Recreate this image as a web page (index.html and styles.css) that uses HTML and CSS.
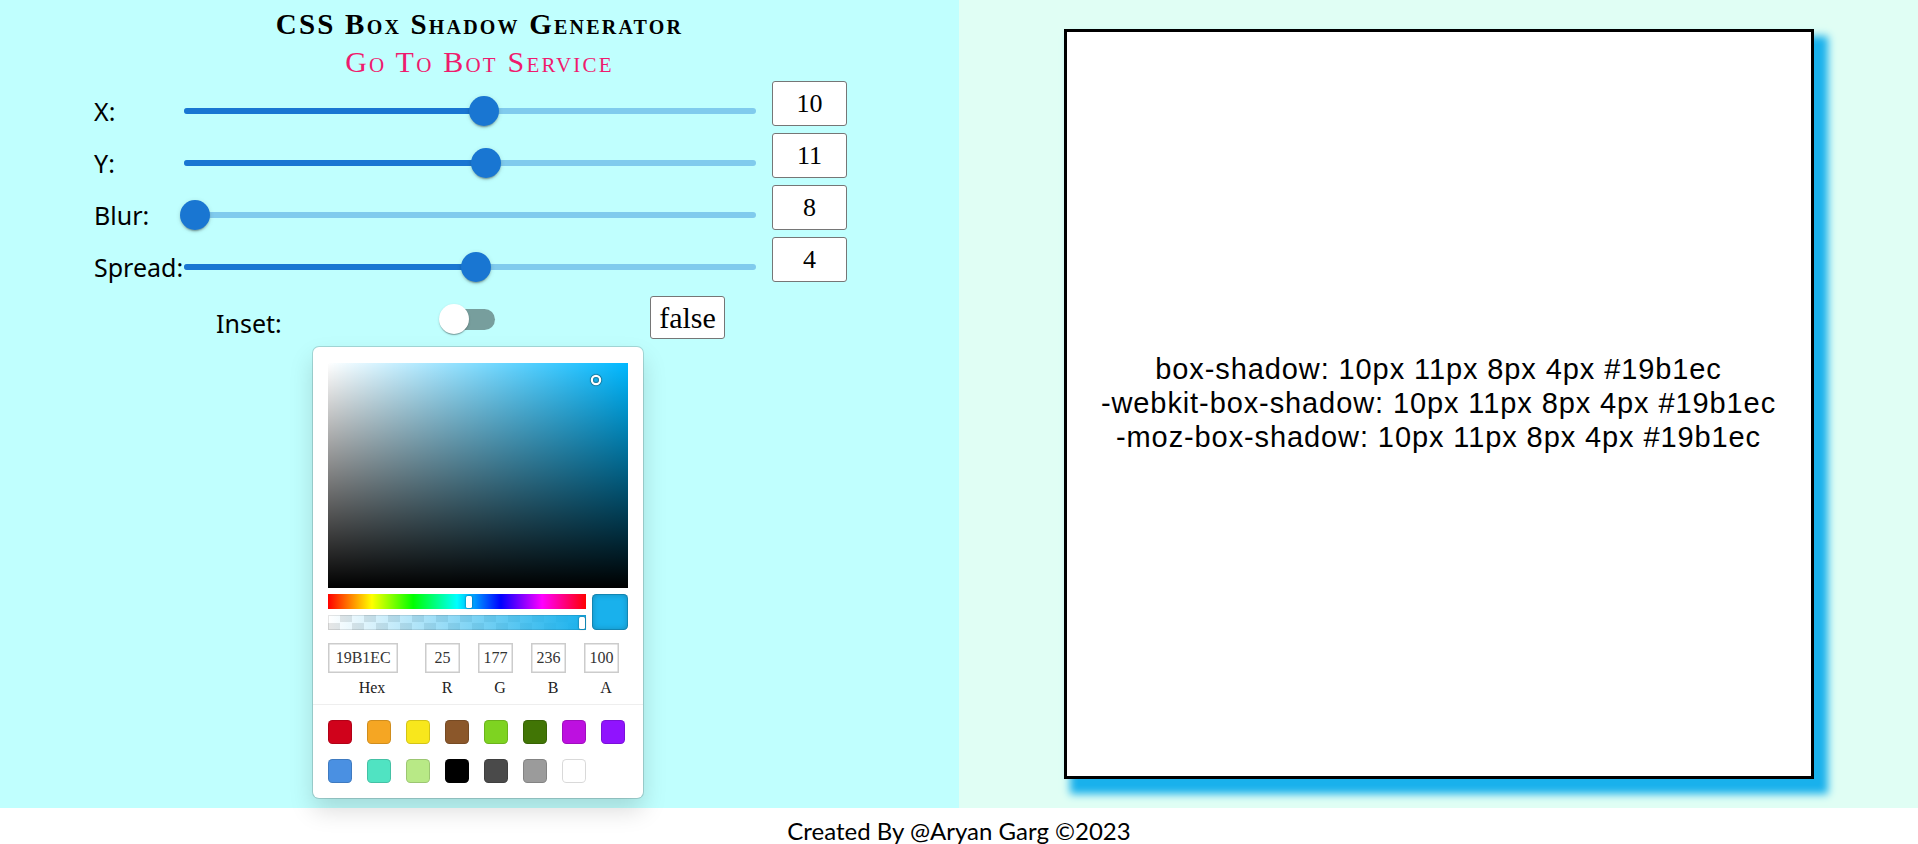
FILE: index.html
```html
<!DOCTYPE html>
<html lang="en">
<head>
<meta charset="utf-8">
<title>CSS Box Shadow Generator</title>
<link rel="stylesheet" href="styles.css">
</head>
<body>
<div class="main">
  <section class="left">
    <h1 class="title">CSS Box Shadow Generator</h1>
    <a class="bot" href="#">Go To Bot Service</a>
    <div class="rows">
      <div class="row">
        <span class="lbl">X:</span>
        <div class="slider"><div class="rail"></div><div class="track" style="width:52.5%"></div><div class="thumb" style="left:52.5%"></div></div>
        <div class="num">10</div>
      </div>
      <div class="row">
        <span class="lbl">Y:</span>
        <div class="slider"><div class="rail"></div><div class="track" style="width:52.75%"></div><div class="thumb" style="left:52.75%"></div></div>
        <div class="num">11</div>
      </div>
      <div class="row">
        <span class="lbl">Blur:</span>
        <div class="slider"><div class="rail"></div><div class="track" style="width:2%"></div><div class="thumb" style="left:2%"></div></div>
        <div class="num">8</div>
      </div>
      <div class="row">
        <span class="lbl">Spread:</span>
        <div class="slider"><div class="rail"></div><div class="track" style="width:51%"></div><div class="thumb" style="left:51%"></div></div>
        <div class="num">4</div>
      </div>
    </div>
    <div class="inset-row">
      <span class="lbl inset-lbl">Inset:</span>
      <div class="toggle"><div class="toggle-track"></div><div class="toggle-thumb"></div></div>
      <button class="bool">false</button>
    </div>
    <div class="picker">
      <div class="sat"><div class="pointer"></div></div>
      <div class="controls">
        <div class="bars">
          <div class="hue"><div class="bar-thumb hue-thumb"></div></div>
          <div class="alpha"><div class="bar-thumb alpha-thumb"></div></div>
        </div>
        <div class="current"></div>
      </div>
      <div class="fields">
        <div class="field hex"><div class="inp">19B1EC</div><div class="flabel">Hex</div></div>
        <div class="field single"><div class="inp">25</div><div class="flabel">R</div></div>
        <div class="field single"><div class="inp">177</div><div class="flabel">G</div></div>
        <div class="field single"><div class="inp">236</div><div class="flabel">B</div></div>
        <div class="field single"><div class="inp">100</div><div class="flabel">A</div></div>
      </div>
      <div class="presets">
        <div class="sw" style="background:#D0021B"></div>
        <div class="sw" style="background:#F5A623"></div>
        <div class="sw" style="background:#F8E71C"></div>
        <div class="sw" style="background:#8B572A"></div>
        <div class="sw" style="background:#7ED321"></div>
        <div class="sw" style="background:#417505"></div>
        <div class="sw" style="background:#BD10E0"></div>
        <div class="sw" style="background:#9013FE"></div>
        <div class="sw" style="background:#4A90E2"></div>
        <div class="sw" style="background:#50E3C2"></div>
        <div class="sw" style="background:#B8E986"></div>
        <div class="sw" style="background:#000000"></div>
        <div class="sw" style="background:#4A4A4A"></div>
        <div class="sw" style="background:#9B9B9B"></div>
        <div class="sw" style="background:#FFFFFF"></div>
      </div>
    </div>
  </section>
  <section class="right">
    <div class="preview">
      <div class="code">
        <span class="line">box-shadow: 10px 11px 8px 4px #19b1ec</span>
        <span class="line">-webkit-box-shadow: 10px 11px 8px 4px #19b1ec</span>
        <span class="line">-moz-box-shadow: 10px 11px 8px 4px #19b1ec</span>
      </div>
    </div>
  </section>
</div>
<footer class="footer">Created By @Aryan Garg ©2023</footer>
</body>
</html>
```

FILE: styles.css
```css
html, body {
  margin: 0;
  padding: 0;
  background: #ffffff;
}
body {
  font-family: "Liberation Serif", serif;
  color: #000;
}
.main {
  display: grid;
  grid-template-columns: 1fr 1fr;
  height: 808px;
}
.left {
  background: #c0fffe;
  display: flex;
  flex-direction: column;
  padding-top: 5px;
  box-sizing: border-box;
}
.title {
  margin: 0;
  text-align: center;
  font-family: "Liberation Serif", serif;
  font-variant: small-caps;
  font-weight: 700;
  font-size: 29px;
  letter-spacing: 2.2px;
  line-height: 38px;
}
.bot {
  display: block;
  text-align: center;
  font-family: "Liberation Serif", serif;
  font-variant: small-caps;
  font-weight: 400;
  font-size: 30px;
  letter-spacing: 2.2px;
  line-height: 38px;
  color: #ef1b6e;
  text-decoration: none;
}
.rows {
  display: flex;
  flex-direction: column;
  gap: 7px;
}
.row {
  display: grid;
  grid-template-columns: 74px 572px 75px;
  column-gap: 16px;
  align-items: start;
  padding-left: 94px;
  height: 45px;
}
.lbl {
  font-family: "Noto Sans", sans-serif;
  font-size: 25px;
  line-height: 30px;
  margin-top: 15px;
  color: #000;
  white-space: nowrap;
}
.slider {
  position: relative;
  height: 30px;
  margin-top: 15px;
}
.rail, .track {
  position: absolute;
  left: 0;
  top: 12px;
  height: 6px;
  border-radius: 3px;
}
.rail {
  right: 0;
  background: #80cbed;
}
.track {
  background: #1976d2;
}
.thumb {
  position: absolute;
  top: 0;
  width: 30px;
  height: 30px;
  margin-left: -15px;
  border-radius: 50%;
  background: #1976d2;
  box-shadow: 0 3px 1px -2px rgba(0,0,0,0.2), 0 2px 2px 0 rgba(0,0,0,0.14), 0 1px 5px 0 rgba(0,0,0,0.12);
}
.num {
  box-sizing: border-box;
  height: 45px;
  border: 1px solid #767676;
  border-radius: 3px;
  background: #fff;
  text-align: center;
  font-size: 26px;
  line-height: 43px;
}
.inset-row {
  display: grid;
  grid-template-columns: 224px 210px 75px;
  align-items: start;
  padding-left: 216px;
  margin-top: 7px;
  height: 51px;
}
.inset-lbl {
  margin-top: 19px;
}
.toggle {
  position: relative;
  width: 56px;
  height: 30px;
  margin-top: 15px;
  margin-left: -1px;
}
.toggle-track {
  position: absolute;
  left: 1px;
  top: 4.5px;
  width: 55px;
  height: 21px;
  border-radius: 10.5px;
  background: #779e9d;
}
.toggle-thumb {
  position: absolute;
  left: 0;
  top: 0;
  width: 30px;
  height: 30px;
  border-radius: 50%;
  background: #fff;
  box-shadow: 0 2px 1px -1px rgba(0,0,0,0.2), 0 1px 1px 0 rgba(0,0,0,0.14), 0 1px 3px 0 rgba(0,0,0,0.12);
}
.bool {
  box-sizing: border-box;
  width: 75px;
  height: 43px;
  margin-top: 7px;
  padding: 0;
  border: 1px solid #767676;
  border-radius: 3px;
  background: #fff;
  font-family: "Liberation Serif", serif;
  font-size: 30px;
  line-height: 40px;
  color: #000;
}
.picker {
  position: relative;
  z-index: 2;
  box-sizing: border-box;
  width: 330px;
  margin: 7px 0 0 313px;
  padding: 16px 15px 0;
  background: #fff;
  border-radius: 6px;
  box-shadow: 0 0 0 1px rgba(0,0,0,0.15), 0 12px 24px rgba(0,0,0,0.15);
}
.sat {
  position: relative;
  height: 225px;
  background:
    linear-gradient(to top, #000, rgba(0,0,0,0)),
    linear-gradient(to right, #fff, rgba(255,255,255,0)),
    rgb(0,184,255);
}
.pointer {
  position: absolute;
  left: 89.4%;
  top: 7.5%;
  width: 6px;
  height: 6px;
  margin: -3px 0 0 -3px;
  border-radius: 50%;
  box-shadow: 0 0 0 2.25px #fff, inset 0 0 1px 1px rgba(0,0,0,0.3), 0 0 1px 3px rgba(0,0,0,0.4);
}
.controls {
  display: flex;
  gap: 6px;
  margin-top: 6px;
}
.bars {
  flex: 1;
  display: flex;
  flex-direction: column;
  gap: 6px;
}
.hue, .alpha {
  position: relative;
  height: 15px;
}
.hue {
  background: linear-gradient(to right, #f00 0%, #ff0 17%, #0f0 33%, #0ff 50%, #00f 67%, #f0f 83%, #f00 100%);
}
.alpha {
  background:
    linear-gradient(to right, rgba(25,177,236,0), rgb(25,177,236)),
    repeating-conic-gradient(#e6e6e6 0 25%, #ffffff 0 50%) 0 0 / 24px 15px;
  box-shadow: inset 0 0 0 1px rgba(0,0,0,0.1);
}
.bar-thumb {
  position: absolute;
  top: 1.5px;
  width: 6px;
  height: 12px;
  margin-left: -3px;
  border-radius: 1.5px;
  background: #fff;
  box-shadow: 0 0 2px rgba(0,0,0,0.6);
}
.hue-thumb {
  left: 54.7%;
}
.alpha-thumb {
  left: calc(100% - 4px);
}
.current {
  width: 36px;
  height: 36px;
  border-radius: 4.5px;
  background: #19b1ec;
  box-shadow: inset 0 0 0 1px rgba(0,0,0,0.15), inset 0 0 6px rgba(0,0,0,0.25);
}
.fields {
  display: grid;
  grid-template-columns: 88px repeat(4, 53px);
  margin-top: 13px;
}
.field.single {
  padding-left: 9px;
}
.inp {
  box-sizing: border-box;
  width: 80%;
  height: 30px;
  box-shadow: inset 0 0 0 1.5px #cccccc;
  text-align: center;
  font-size: 16px;
  line-height: 30px;
  color: #333;
}
.flabel {
  text-align: center;
  font-size: 16px;
  line-height: 20px;
  padding: 5px 0 6px;
  color: #222;
}
.presets {
  display: grid;
  grid-template-columns: repeat(8, 24px);
  gap: 15px;
  margin: 0 -15px;
  padding: 15px 15px 15px;
  border-top: 1px solid #eeeeee;
}
.sw {
  width: 24px;
  height: 24px;
  border-radius: 4.5px;
  box-shadow: inset 0 0 0 1px rgba(0,0,0,0.15);
}
.right {
  background: #e0fef4;
  display: flex;
  align-items: center;
  justify-content: center;
}
.preview {
  box-sizing: border-box;
  width: 750px;
  height: 750px;
  border: 3px solid #000;
  background: #fff;
  box-shadow: 10px 11px 8px 4px #19b1ec;
  display: flex;
  align-items: center;
  justify-content: center;
}
.code {
  display: flex;
  flex-direction: column;
  align-items: center;
  margin-bottom: 3px;
  font-family: "Liberation Sans", sans-serif;
  font-size: 29px;
  letter-spacing: 0.9px;
  color: #000;
}
.line {
  display: block;
  height: 34px;
  line-height: 34px;
  white-space: nowrap;
}
.footer {
  text-align: center;
  font-family: "Lato", sans-serif;
  font-size: 24px;
  line-height: 28px;
  padding-top: 9px;
  color: #000;
}
```
